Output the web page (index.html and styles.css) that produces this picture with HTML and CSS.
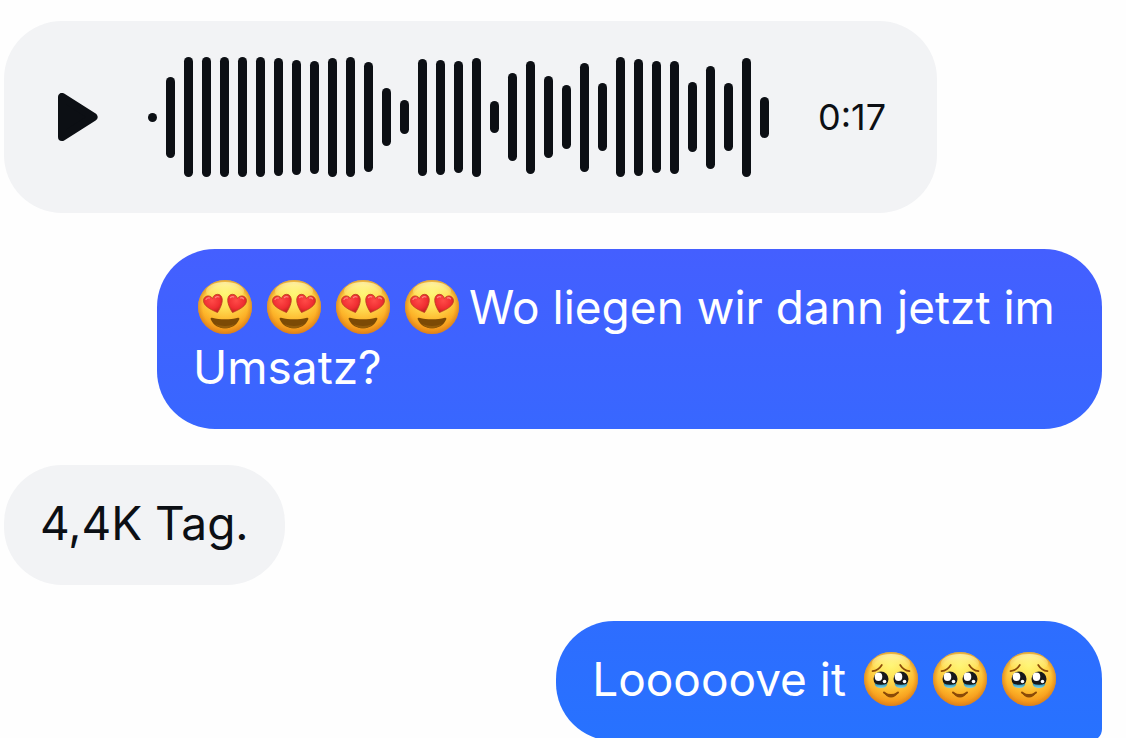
FILE: index.html
```html
<!DOCTYPE html>
<html lang="de">
<head>
<meta charset="utf-8">
<meta name="viewport" content="width=device-width, initial-scale=1">
<title>Chat</title>
<link rel="stylesheet" href="styles.css">
</head>
<body>
<svg class="defs" aria-hidden="true">
  <defs>
    <radialGradient id="face" cx="50%" cy="24%" r="78%">
      <stop offset="0" stop-color="#fff870"/>
      <stop offset=".35" stop-color="#ffe056"/>
      <stop offset=".68" stop-color="#fdb52a"/>
      <stop offset="1" stop-color="#ee8410"/>
    </radialGradient>
    <radialGradient id="rim" cx="50%" cy="50%" r="50%">
      <stop offset=".82" stop-color="#e08a20" stop-opacity="0"/>
      <stop offset="1" stop-color="#d07b20" stop-opacity=".65"/>
    </radialGradient>
    <linearGradient id="shine" x1="0" y1="0" x2="0" y2="1">
      <stop offset="0" stop-color="#fff6b8" stop-opacity=".8"/>
      <stop offset="1" stop-color="#ffee70" stop-opacity="0"/>
    </linearGradient>
    <radialGradient id="heart" cx="45%" cy="35%" r="65%">
      <stop offset="0" stop-color="#ff4b48"/>
      <stop offset=".65" stop-color="#f02e32"/>
      <stop offset="1" stop-color="#c52022"/>
    </radialGradient>
    <linearGradient id="tear" x1="0" y1="0" x2="0" y2="1">
      <stop offset="0" stop-color="#2d8fae"/>
      <stop offset="1" stop-color="#7fd3ea"/>
    </linearGradient>
    <symbol id="love" viewBox="0 0 54 54">
      <circle cx="27" cy="27" r="27" fill="url(#face)"/>
      <circle cx="27" cy="27" r="27" fill="url(#rim)"/>
      <ellipse cx="27" cy="11" rx="19" ry="9" fill="url(#shine)"/>
      <g fill="url(#heart)" stroke="#b9401f" stroke-width=".8" stroke-linejoin="round">
        <path d="M19.500 32.500C12 29.500 5.500 25.500 5.500 20.800C5.500 15.500 12 14.200 14.600 18.500C15.500 13.300 23.300 12.500 24.200 18.700C24.700 22.800 22.500 28 19.500 32.500Z"/>
        <path d="M34.500 32.500C42 29.500 48.500 25.500 48.500 20.800C48.500 15.500 42 14.200 39.400 18.500C38.500 13.300 30.700 12.500 29.800 18.700C29.300 22.800 31.500 28 34.500 32.500Z"/>
      </g>
      <g fill="none" stroke="#ff9a8e" stroke-width="1.300" stroke-linecap="round" opacity=".8">
        <path d="M8 19.500q1.200-2 3.200-1.500M17.500 17.500q1.500-1.500 3.500-.5M32.500 17.500q1.200-1.300 3.200-.7M42.500 18q1.500-.8 3 .8"/>
      </g>
      <path d="M14 37.800C22 39.800 32 39.800 40 37.800C41.200 37.500 41.700 38.400 41.200 39.500C38.500 45.500 33 48.300 27 48.300C21 48.300 15.500 45.500 12.800 39.500C12.300 38.400 12.800 37.500 14 37.800Z" fill="#7c4a05"/>
      <path d="M17 44q10 4 20 0q-4 4.100-10 4.200q-6-.1-10-4.200Z" fill="#935c0a"/>
    </symbol>
    <symbol id="moved" viewBox="0 0 54 54">
      <circle cx="27" cy="27" r="27" fill="url(#face)"/>
      <circle cx="27" cy="27" r="27" fill="url(#rim)"/>
      <ellipse cx="27" cy="11" rx="19" ry="9" fill="url(#shine)"/>
      <g fill="none" stroke="#8a4a08" stroke-width="1.700" stroke-linecap="round">
        <path d="M8.500 19.200Q14.500 18.500 17.800 13"/>
        <path d="M45.500 19.200Q39.500 18.500 36.200 13"/>
        <path d="M20 40.500Q27 47 34 40.500" stroke-width="2"/>
      </g>
      <path d="M20 40.500Q27 43.500 34 40.500Q31.500 45.500 27 45.500Q22.500 45.500 20 40.500Z" fill="#8a4a08"/>
      <circle cx="17" cy="27" r="7.500" fill="#17181b"/>
      <circle cx="37" cy="27" r="7.500" fill="#17181b"/>
      <path d="M10.500 31.500Q17 34 23.500 31.500Q22.500 36 17 36Q11.500 36 10.500 31.500Z" fill="url(#tear)"/>
      <path d="M30.500 31.500Q37 34 43.500 31.500Q42.500 36 37 36Q31.500 36 30.500 31.500Z" fill="url(#tear)"/>
      <ellipse cx="14.500" cy="24.800" rx="3.800" ry="4.200" fill="#fff"/>
      <ellipse cx="34.500" cy="24.800" rx="3.800" ry="4.200" fill="#fff"/>
      <circle cx="20.500" cy="29.500" r="1.800" fill="#fff"/>
      <circle cx="40.500" cy="29.500" r="1.800" fill="#fff"/>
    </symbol>
  </defs>
</svg>

<main class="chat">
  <article class="bubble received voice">
    <button class="play" type="button" aria-label="Abspielen">
      <svg class="play-icon" viewBox="0 0 40 48" aria-hidden="true"><path d="M4 4V44L35.500 24Z" fill="currentColor" stroke="currentColor" stroke-width="8" stroke-linejoin="round"/></svg>
    </button>
    <div class="wave" aria-hidden="true">
      <i style="height:9px"></i><i style="height:81px"></i><i style="height:120px"></i><i style="height:120px"></i><i style="height:120px"></i><i style="height:120px"></i><i style="height:120px"></i><i style="height:118px"></i><i style="height:115px"></i><i style="height:113px"></i><i style="height:119px"></i><i style="height:120px"></i><i style="height:110px"></i><i style="height:58px"></i><i style="height:34px"></i><i style="height:117px"></i><i style="height:115px"></i><i style="height:112px"></i><i style="height:119px"></i><i style="height:32px"></i><i style="height:88px"></i><i style="height:113px"></i><i style="height:82px"></i><i style="height:64px"></i><i style="height:109px"></i><i style="height:68px"></i><i style="height:120px"></i><i style="height:117px"></i><i style="height:112px"></i><i style="height:113px"></i><i style="height:70px"></i><i style="height:103px"></i><i style="height:68px"></i><i style="height:119px"></i><i style="height:41px"></i>
    </div>
    <time class="duration">0:17</time>
  </article>

  <p class="bubble sent"><svg class="emoji" role="img" aria-label="😍"><use href="#love"/></svg><svg class="emoji" role="img" aria-label="😍"><use href="#love"/></svg><svg class="emoji" role="img" aria-label="😍"><use href="#love"/></svg><svg class="emoji" role="img" aria-label="😍"><use href="#love"/></svg>Wo liegen wir dann jetzt im Umsatz?</p>

  <p class="bubble received">4,4K Tag.</p>

  <p class="bubble sent grouped">Looooove it <svg class="emoji" role="img" aria-label="🥹"><use href="#moved"/></svg><svg class="emoji" role="img" aria-label="🥹"><use href="#moved"/></svg><svg class="emoji" role="img" aria-label="🥹"><use href="#moved"/></svg></p>
</main>
</body>
</html>
```
FILE: styles.css
```css
* {
  box-sizing: border-box;
}

body {
  margin: 0;
  background: #fefefe;
  color: #0c0f14;
  font-family: Inter, "Liberation Sans", sans-serif;
}

.defs {
  position: absolute;
  width: 0;
  height: 0;
}

.chat {
  display: flex;
  flex-direction: column;
  align-items: flex-start;
  gap: 36px;
  height: 100vh;
  padding: 21px 24px 0 4px;
  overflow: hidden;
}

.bubble {
  flex: none;
  max-width: calc(100% - 153px);
  margin: 0;
  padding: 28px 36px 32px;
  border-radius: 58px;
  font-size: 46px;
  line-height: 60px;
}

.received {
  background: #f2f3f5;
}

.sent {
  align-self: flex-end;
  background: linear-gradient(#445fff, #3867ff);
  color: #fff;
}

.grouped {
  border-bottom-right-radius: 12px;
  background: linear-gradient(#2e6dff, #2772ff);
}

.voice {
  display: flex;
  align-items: center;
  padding: 36px 51px 36px 54px;
}

.play {
  padding: 0;
  border: 0;
  background: none;
  color: inherit;
  cursor: pointer;
}

.play-icon {
  display: block;
  width: 40px;
  height: 48px;
}

.wave {
  display: flex;
  align-items: center;
  gap: 9px;
  height: 120px;
  margin: 0 49px 0 50px;
}

.wave i {
  width: 9px;
  border-radius: 5px;
  background: #0c0f14;
}

.duration {
  font-size: 36px;
}

.emoji {
  width: 54px;
  height: 54px;
  margin: 0 10px 0 5px;
  vertical-align: -10px;
}
```
